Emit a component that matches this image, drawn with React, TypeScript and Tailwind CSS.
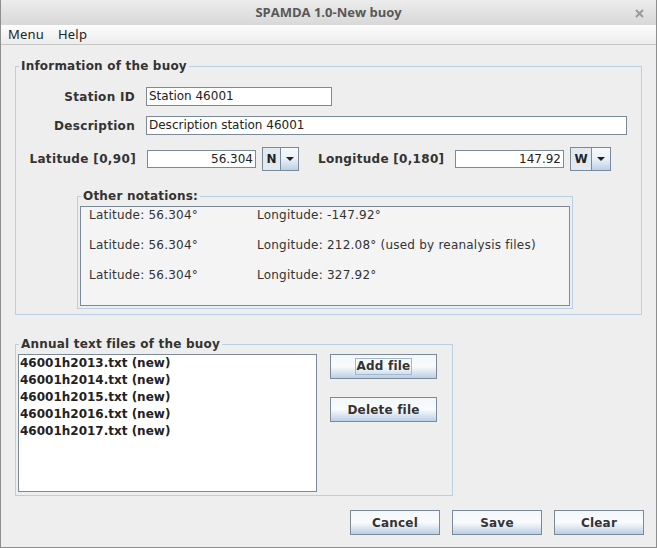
import React from "react";

const dejavu = "font-['DejaVu_Sans',sans-serif]";

type ComboProps = {
    letter: string;
    letterWidth: string;
    arrowWidth: string;
}

const Combo: React.FC<ComboProps> = props => {
    const { letter, letterWidth, arrowWidth } = props;
    return (
        <div className="flex h-[24px] border border-[#7a8a99] shrink-0">
            <div className={`${letterWidth} flex items-center justify-center bg-[#e2e9f1] border-r border-[#7a8a99] text-[12px] font-bold text-[#222]`}>
                {letter}
            </div>
            <div className={`${arrowWidth} flex items-center justify-center bg-gradient-to-b from-[#f6f9fc] via-[#e9f0f7] to-[#bcd0e5]`}>
                <svg width="8" height="4" viewBox="0 0 8 4">
                    <path d="M0 0H8L4 4Z" fill="#222" />
                </svg>
            </div>
        </div>
    )
}

type ButtonProps = {
    label: string;
    className: string;
    focused?: boolean;
}

const MetalButton: React.FC<ButtonProps> = props => {
    const { label, className, focused } = props;
    return (
        <button
            type="button"
            className={`${className} h-[25px] flex items-center justify-center border border-[#7a8a99] bg-gradient-to-b from-[#f3f7fb] via-[#f9fbfd] to-[#bccfe4] text-[12px] font-bold tracking-[0.2px] text-[#333] shrink-0`}
        >
            {focused
                ? <span className="border border-[#a3b8cf] px-[1px] leading-[15px]">{label}</span>
                : label}
        </button>
    )
}

const files = [
    "46001h2013.txt (new)",
    "46001h2014.txt (new)",
    "46001h2015.txt (new)",
    "46001h2016.txt (new)",
    "46001h2017.txt (new)",
];

const notations = [
    { lat: "Latitude: 56.304°", lon: "Longitude: -147.92°" },
    { lat: "Latitude: 56.304°", lon: "Longitude: 212.08° (used by reanalysis files)" },
    { lat: "Latitude: 56.304°", lon: "Longitude: 327.92°" },
];

const App: React.FC = () => {
    return (
        <div className={`w-[657px] h-[548px] flex flex-col border-x border-b border-[#8e8e8e] bg-[#eeeeee] text-[#333] ${dejavu} overflow-hidden`}>

            {/* title bar */}
            <div className="h-[25px] shrink-0 relative flex items-center justify-center rounded-t-[4px] bg-gradient-to-b from-[#ececec] to-[#d8d8d8]">
                <span className="font-['Open_Sans',sans-serif] font-bold text-[13px] text-[#585858]">
                    SPAMDA 1.0-New buoy
                </span>
                <svg className="absolute right-[12px] top-[9px]" width="9" height="9" viewBox="0 0 9 9">
                    <path d="M1 1L8 8M8 1L1 8" stroke="#9a9a9a" strokeWidth="2" />
                </svg>
            </div>

            {/* menu bar */}
            <div className="h-[20px] shrink-0 flex items-center gap-[14px] pl-[7px] border-b border-[#c6c6c6] bg-gradient-to-b from-[#fdfdfd] to-[#ececec] font-['Noto_Sans',sans-serif] text-[13px] tracking-[0.2px] text-[#222]">
                <span>Menu</span>
                <span>Help</span>
            </div>

            <div className="flex flex-col pl-[14px]">

                {/* information of the buoy */}
                <fieldset className="mt-[13px] w-[627px] h-[257px] border border-[#b8cfe5]">
                    <legend className="ml-[3px] px-[2px] text-[12px] leading-[16px] font-bold tracking-[0.2px]">
                        Information of the buoy
                    </legend>

                    <div className="mt-[13px] flex items-center h-[19px]">
                        <label className="w-[119px] text-right text-[12px] font-bold tracking-[0.3px] whitespace-nowrap">Station ID</label>
                        <div className="ml-[11px] w-[186px] h-[19px] bg-white border border-[#7a8a99] pl-[2px] text-[12px] leading-[17px] text-[#222]">
                            Station 46001
                        </div>
                    </div>

                    <div className="mt-[10px] flex items-center h-[19px]">
                        <label className="w-[119px] text-right text-[12px] font-bold tracking-[0.3px] whitespace-nowrap">Description</label>
                        <div className="ml-[11px] w-[481px] h-[19px] bg-white border border-[#7a8a99] pl-[2px] text-[12px] leading-[17px] text-[#222]">
                            Description station 46001
                        </div>
                    </div>

                    <div className="mt-[12px] flex items-center h-[24px]">
                        <label className="w-[120px] text-right text-[12px] font-bold tracking-[0.35px] whitespace-nowrap">Latitude [0,90]</label>
                        <div className="ml-[11px] w-[109px] h-[18px] bg-white border border-[#7a8a99] pr-[2px] text-right text-[12px] leading-[16px] text-[#222]">
                            56.304
                        </div>
                        <div className="ml-[6px]">
                            <Combo letter="N" letterWidth="w-[18px]" arrowWidth="w-[17px]" />
                        </div>
                        <label className="ml-[19px] w-[125px] shrink-0 text-[12px] font-bold tracking-[0.3px] whitespace-nowrap">Longitude [0,180]</label>
                        <div className="ml-[12px] w-[109px] h-[18px] shrink-0 bg-white border border-[#7a8a99] pr-[2px] text-right text-[12px] leading-[16px] text-[#222]">
                            147.92
                        </div>
                        <div className="ml-[6px]">
                            <Combo letter="W" letterWidth="w-[21px]" arrowWidth="w-[18px]" />
                        </div>
                    </div>

                    {/* other notations */}
                    <fieldset className="mt-[17px] ml-[61px] w-[496px] h-[121px] border border-[#b8cfe5]">
                        <legend className="ml-[3px] px-[2px] text-[12px] leading-[16px] font-bold tracking-[0.2px]">
                            Other notations:
                        </legend>
                        <div className="mt-[2px] mx-[2px] h-[100px] bg-[#f4f4f4] border border-[#7a8a99] pl-[8px] pt-[1px] text-[12px] tracking-[0.22px]">
                            {notations.map((n, i) => (
                                <div key={i} className="flex h-[30px] leading-[14px]">
                                    <span className="w-[168px]">{n.lat}</span>
                                    <span>{n.lon}</span>
                                </div>
                            ))}
                        </div>
                    </fieldset>
                </fieldset>

                {/* annual text files */}
                <fieldset className="mt-[21px] w-[438px] h-[160px] border border-[#b8cfe5]">
                    <legend className="ml-[3px] px-[2px] text-[12px] leading-[16px] font-bold tracking-[0.2px]">
                        Annual text files of the buoy
                    </legend>
                    <div className="flex mt-[2px] ml-[2px]">
                        <ul className="w-[299px] h-[138px] bg-white border border-[#7a8a99] pl-[1px] text-[12px] leading-[17px] font-bold text-[#222]">
                            {files.map(f => (
                                <li key={f}>{f}</li>
                            ))}
                        </ul>
                        <div className="ml-[13px] flex flex-col gap-[18px]">
                            <MetalButton label="Add file" className="w-[107px]" focused />
                            <MetalButton label="Delete file" className="w-[107px]" />
                        </div>
                    </div>
                </fieldset>

                {/* bottom buttons */}
                <div className="mt-[14px] flex justify-end gap-[12px] pr-[12px]">
                    <MetalButton label="Cancel" className="w-[90px]" />
                    <MetalButton label="Save" className="w-[90px]" />
                    <MetalButton label="Clear" className="w-[90px]" />
                </div>
            </div>
        </div>
    )
}

export default App;
